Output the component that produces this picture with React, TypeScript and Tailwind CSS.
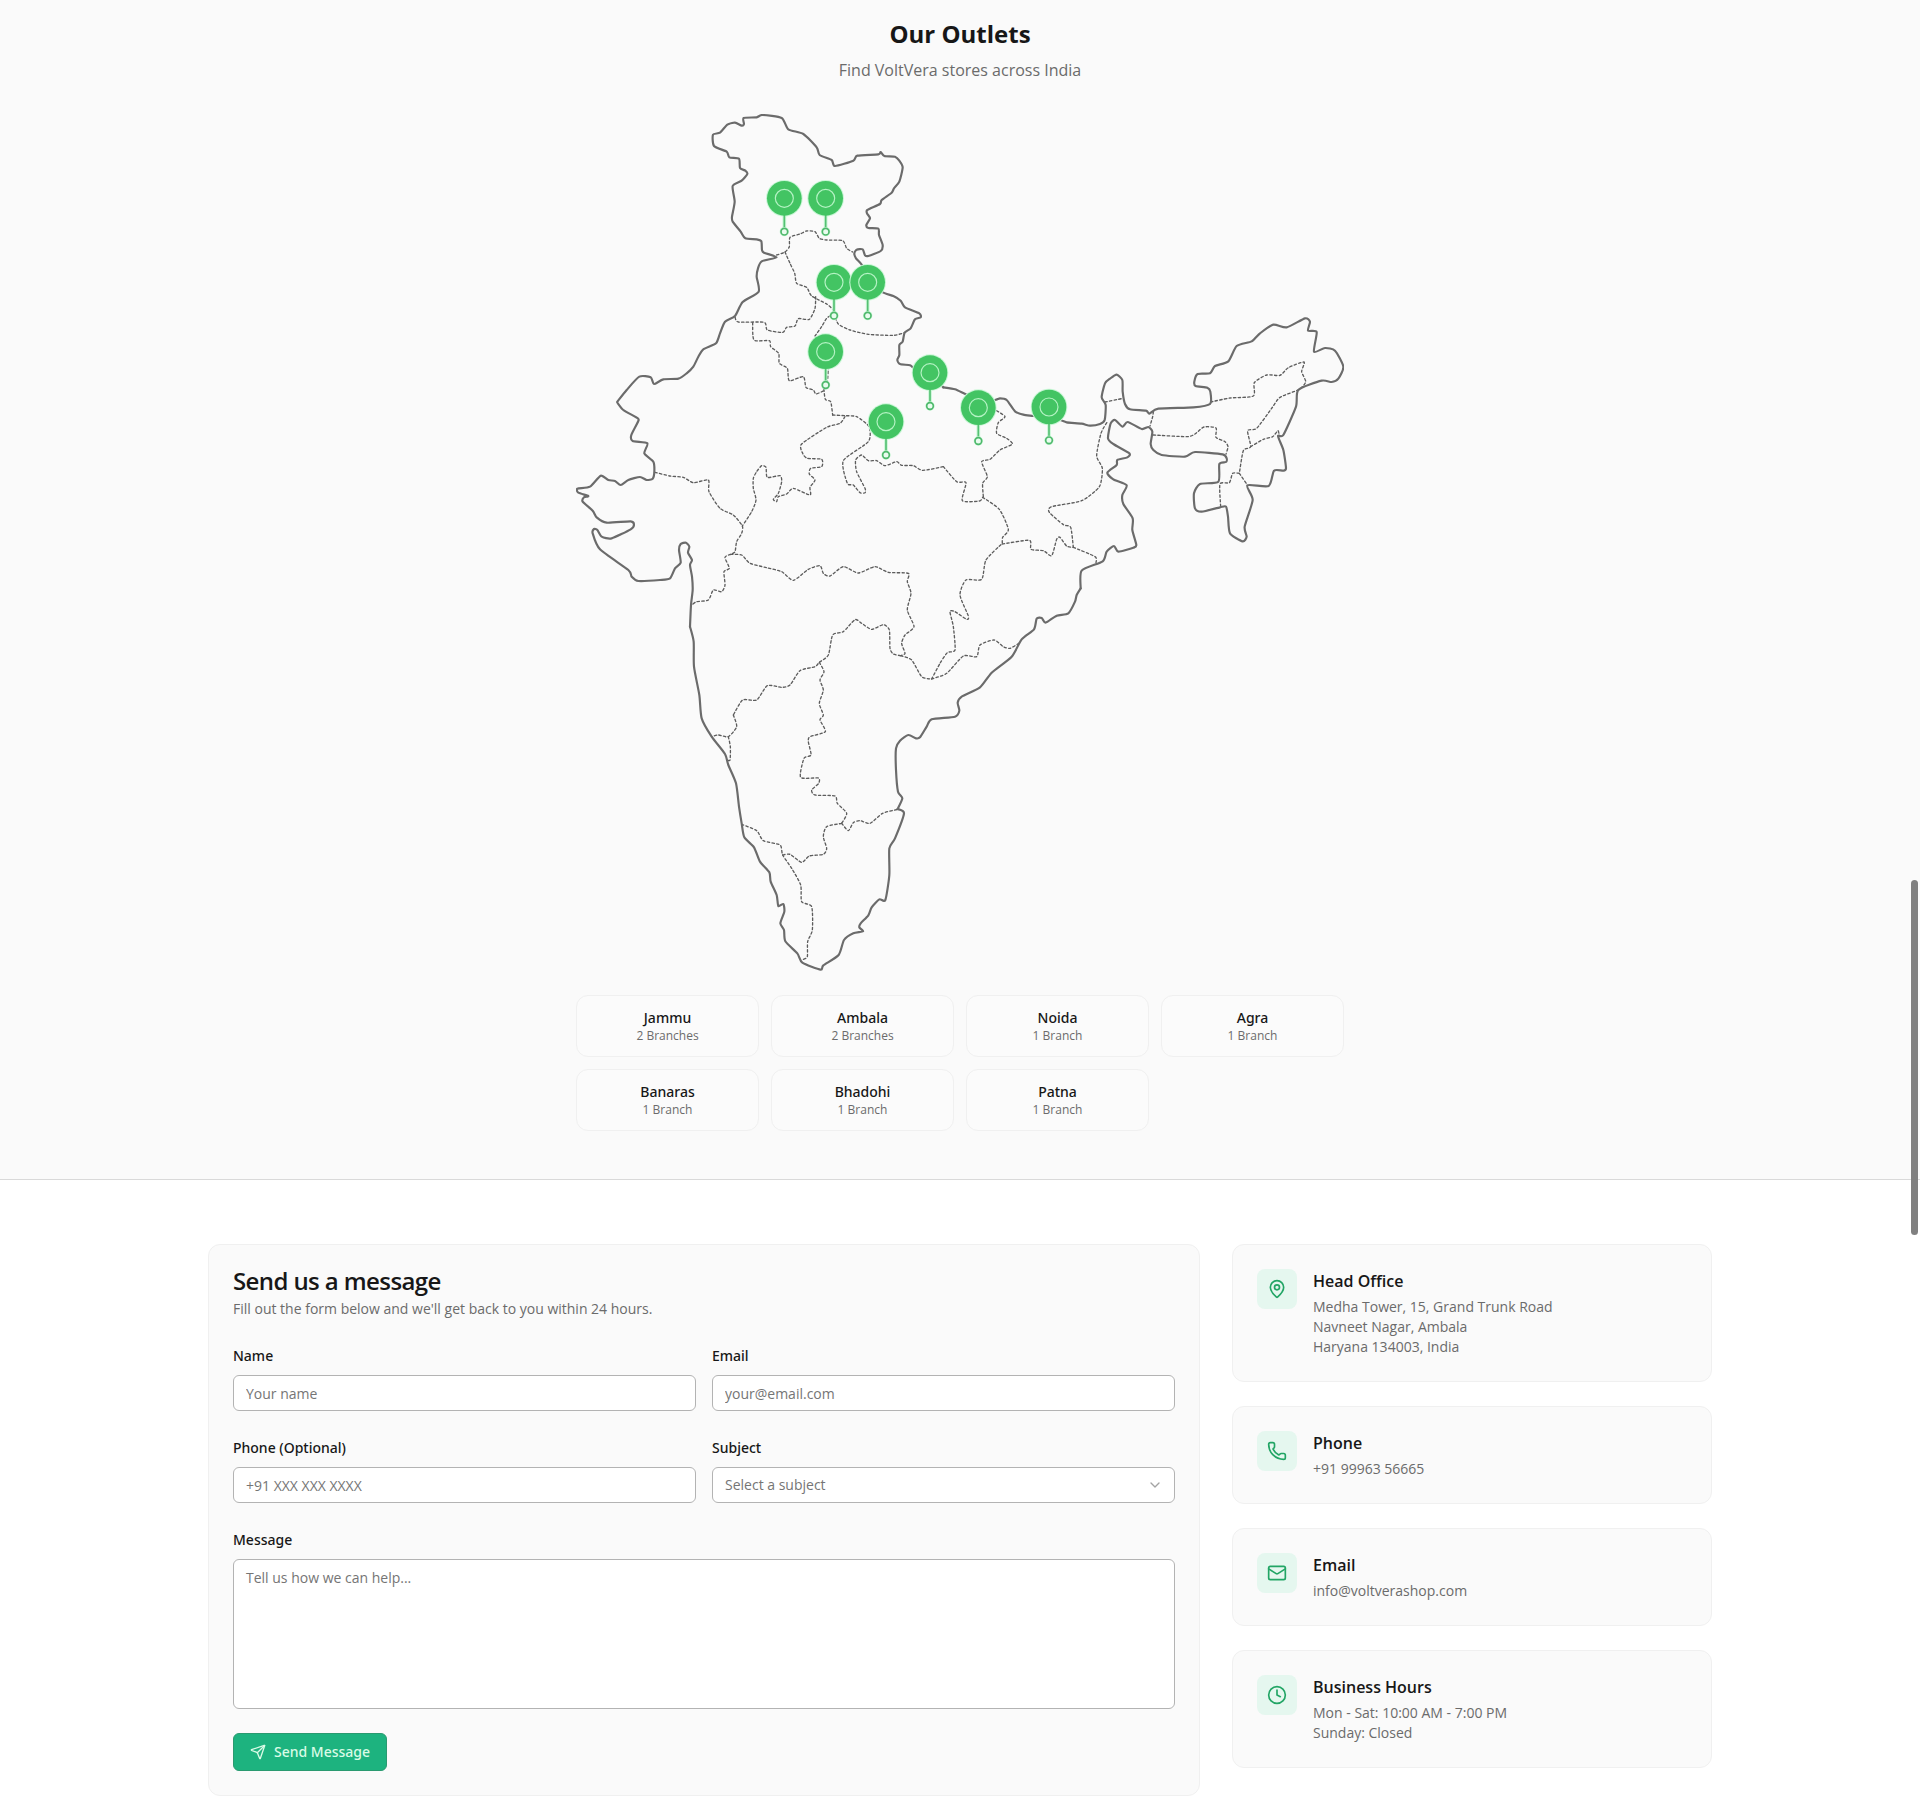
import { useState } from "react";
import type { FormEvent, ReactNode } from "react";
import { ChevronDown, Clock, Mail, MapPin, Phone, Send } from "lucide-react";

type MapSheet = {
  x: number;
  y: number;
  coast: string[];
  borders: string[];
};

// The map is drawn in sheets, each with its own origin
const mapSheets: MapSheet[] = [
  // North
  {
    x: 0,
    y: 0,
    coast: [
      "172,905 200,870 238,830 272,832 282,852 310,838 355,836 380,820 400,800 415,770 430,748 468,730 480,700 495,665 525,648 548,606 596,575 590,530 594,505 605,484 650,472 612,458 606,450 604,424 590,418 556,415 542,395 518,365 516,350 524,305 518,258 545,242 562,222 556,212 540,204 537,176 508,172 500,155 462,138 459,104 480,98 502,74 525,68 545,77 552,72 551,54 590,52 607,45 665,54 685,88 730,102 770,142 779,165 815,180 825,198 880,182 892,167 955,163 962,156 973,168 1005,170 1018,182 1028,202 1018,245 1002,265 995,278 965,300 960,312 922,330 921,340 930,355 919,375 925,384 955,386 957,405 968,435 962,453 925,468 915,466 908,448 890,449 883,460 888,475 905,494 925,530 965,575 1000,588 1022,602 1035,622 1078,640 1082,652 1065,658 1052,685 1034,698 1028,725 1018,735 1018,765 1012,780 1020,792 1050,796 1062,805 1110,830 1150,862",
    ],
    borders: [
      "650,465 675,456 688,440 690,412 720,402 740,393 765,395 778,415 800,420 848,422 860,445 878,456",
      "675,456 690,490 704,520 710,550 740,562 755,588 800,612 820,630 822,640",
      "767,590 765,625 748,658 715,656 705,678 680,682 668,697 622,690 612,667 535,666 525,650",
      "822,640 800,655 785,680 765,708",
      "822,640 835,672 870,690 925,703 1000,706 1034,698",
      "578,668 582,720 628,722 632,740 656,760 658,790 682,805 688,842 730,830 738,862 760,870 768,882 792,872",
      "805,800 802,845 792,862 796,898 812,905 818,945",
    ],
  },
  // West and centre
  {
    x: 0,
    y: 900,
    coast: [
      "390,680 393,615 398,570 396,530 390,495 396,480 384,458 388,440 378,428 362,432 357,450 362,488 345,505 330,535 300,540 235,543 215,530 205,510 120,448 98,400 102,387 112,390 125,410 155,415 212,388 222,374 212,364 140,368 110,352 98,332 68,305 72,292 85,288 55,278 52,266 90,260 122,227 145,240 165,243 182,255 205,240 240,231 260,240 278,236 283,215 280,185 253,160 262,130 218,123 214,105 236,60 225,50 190,30 172,8",
    ],
    borders: [
      "818,45 855,47 890,50 927,80 925,125 850,182 862,250 880,255 900,278 915,278 915,265 890,215 887,180 905,165 925,182 950,182 975,197 1010,185 1025,196 1060,197 1088,211 1150,200",
      "855,50 840,70 800,82 725,132 728,160 742,175 785,178 785,200 752,205 748,222 765,240 750,262 750,285 700,265 680,282 655,290 650,305 640,298 655,280 665,245 660,227 622,232 618,202 605,197 590,215 580,235 580,265 588,300 575,335 547,378",
      "285,217 330,228 370,232 400,248 445,240 447,275 480,325 520,345 547,378 545,400 530,425 525,455 512,463",
      "512,463 495,472 508,505 492,515 495,555 485,575 460,570 445,600 410,605 395,615",
      "512,463 545,465 570,490 620,503 665,515 700,541 745,508 780,497 790,520 810,528 850,500 895,519 945,500 985,517 1045,520 1042,545 1053,580 1042,630 1062,680 1035,705 1025,730 1035,760 1022,767",
      "1022,767 1000,762 990,745 988,690 970,674 935,688 905,670 885,659 850,695 818,705 805,765 778,787 765,800 720,812 690,855 665,862 622,857 590,900 548,900 520,945",
    ],
  },
  // East and north-east
  {
    x: 1020,
    y: 600,
    coast: [
      "130,262 165,268 200,284 245,300 285,300 300,295 320,300 345,334 370,344 400,348 440,354 480,360 500,367 545,371 570,377 600,372 614,360 617,315 605,292 615,250 630,236 650,224 667,240 668,275 675,312 690,328 738,332 748,341 775,326 880,322 930,312 931,275 922,263 887,258 883,245 893,222 930,220 945,198 985,184 1010,138 1055,124 1080,100 1120,74 1160,82 1215,55 1230,65 1224,92 1250,96 1242,155 1275,144 1305,152 1330,200 1315,236 1295,246 1265,242 1195,270 1188,320 1150,405 1134,408 1150,450 1158,505 1150,512 1122,512 1106,558 1042,556 1058,600 1034,680 1040,710 1028,724 990,700 984,650 978,620 960,622 905,635 885,625 882,580 900,552 955,545 958,492 978,486 980,475 968,463 885,456 855,470 785,465 760,450 752,432 757,395 745,381 725,387 683,366 668,380 645,360 632,370 624,415 640,432 688,460 682,472 652,480 650,495 622,518 640,538 680,556 667,585 670,612 698,655 697,690 709,735 700,743 655,755 642,738 620,755 608,784 545,812 542,865",
    ],
    borders: [
      "130,500 170,545 198,548 187,602 238,603 248,592",
      "248,592 298,628 325,688 308,712 307,732",
      "307,732 388,721 393,748 430,752 455,767 470,718 480,712 500,738 520,742",
      "520,742 512,682 490,674 448,637 455,620 545,602 598,560 607,505 590,468 603,400 622,365",
      "520,742 585,770 588,788",
      "290,332 315,350 295,368 290,400 320,415 337,432 300,450 270,478 245,485 262,530 248,550 250,590",
      "615,306 665,296",
      "760,335 758,350 750,378",
      "760,405 860,410 885,402 912,381 948,384 948,412 975,425 984,440 978,462",
      "932,306 990,294 1060,288 1063,248 1100,225 1140,226 1165,203 1212,186 1205,215 1217,245 1198,268 1140,292 1115,325 1070,385 1043,392 1052,440 1030,452 1018,520",
      "1052,440 1090,418 1118,410 1134,392 1138,408",
      "1018,520 998,520 988,548 960,552 962,620",
      "1018,520 1040,552",
    ],
  },
  // South-east coast
  {
    x: 900,
    y: 1140,
    coast: [
      "662,325 650,345 645,365 625,400 590,407 557,428 545,414 530,416 522,448 485,478 455,530 395,578 360,622 305,650 293,668 298,692 285,710 215,718 200,740 180,772 168,775 145,765 120,782 108,805 108,870 114,935 127,955 113,987",
    ],
    borders: [
      "122,527 155,540 185,590 215,597",
      "215,597 260,580 310,528 350,530 360,495 402,480 430,500 450,505 480,488",
      "215,597 240,550 262,518 285,510 280,440 270,395 285,395 320,418 325,408 300,345 318,300 365,298 378,240 427,190",
    ],
  },
  // South
  {
    x: 0,
    y: 1560,
    coast: [
      "1013,567 1032,580 1005,655 988,685 988,765 976,840 958,838 935,862 925,886 902,910 898,922 909,934 880,940 852,960 836,1005 790,1036 782,1049 727,1028 712,1000 676,964 672,930 661,910 673,875 670,852 655,858 650,825 632,785 628,757 600,725 582,682 553,652 545,610 537,560 528,490 505,435 495,402 455,350 425,295 418,225 402,140 401,65 390,20",
    ],
    borders: [
      "520,285 530,320 505,350 475,345 455,350",
      "505,350 511,380 510,420 500,420",
      "778,127 792,155 780,180 790,210 778,250 790,285 780,300 796,335 750,350 745,365 753,405 732,415 722,472 775,474 776,490 755,510 765,525 825,528 832,550 860,580 845,610",
      "845,610 865,632 880,608 900,602 930,610 968,580 1013,568",
      "845,610 800,620 790,650 800,685 790,703 748,708 725,727 690,703 668,705",
      "545,613 590,632 610,662 660,675 668,705 695,745 722,795 725,845 755,860 757,930 743,965 742,1010 730,1018",
    ],
  },
];

const pins = [
  { city: "Jammu", x: 673, y: 295 },
  { city: "Jammu", x: 797, y: 295 },
  { city: "Ambala", x: 822, y: 547 },
  { city: "Ambala", x: 923, y: 547 },
  { city: "Noida", x: 797, y: 755 },
  { city: "Agra", x: 1110, y: 818 },
  { city: "Banaras", x: 978, y: 965 },
  { city: "Bhadohi", x: 1255, y: 923 },
  { city: "Patna", x: 1467, y: 921 },
];

const outlets = [
  { city: "Jammu", branches: 2 },
  { city: "Ambala", branches: 2 },
  { city: "Noida", branches: 1 },
  { city: "Agra", branches: 1 },
  { city: "Banaras", branches: 1 },
  { city: "Bhadohi", branches: 1 },
  { city: "Patna", branches: 1 },
];

const subjects = ["Product Inquiry", "Order Support", "Business Opportunity", "Other"];

// Soft curve through a list of "x,y" points
function smoothPath(points: string) {
  const p = points.split(" ").map((pair) => pair.split(",").map(Number));
  let d = `M${p[0][0]} ${p[0][1]}`;
  for (let i = 0; i < p.length - 1; i++) {
    const prev = p[i - 1] || p[i];
    const next = p[i + 1];
    const after = p[i + 2] || next;
    const c1 = [p[i][0] + (next[0] - prev[0]) / 9, p[i][1] + (next[1] - prev[1]) / 9];
    const c2 = [next[0] - (after[0] - p[i][0]) / 9, next[1] - (after[1] - p[i][1]) / 9];
    d += `C${c1[0]} ${c1[1]} ${c2[0]} ${c2[1]} ${next[0]} ${next[1]}`;
  }
  return d;
}

function IndiaMap() {
  return (
    <svg
      viewBox="48 42 2304 2571"
      className="block w-full h-auto"
      fill="none"
      role="img"
      aria-label="Map of India with VoltVera outlets"
    >
      {mapSheets.map((sheet, i) => (
        <g
          key={i}
          transform={`translate(${sheet.x} ${sheet.y})`}
          strokeLinecap="round"
          strokeLinejoin="round"
        >
          {sheet.borders.map((line) => (
            <path
              key={line}
              d={smoothPath(line)}
              stroke="#5c5c5c"
              strokeWidth="4"
              strokeDasharray="7 7"
            />
          ))}
          {sheet.coast.map((line) => (
            <path key={line} d={smoothPath(line)} stroke="#6b6b6b" strokeWidth="6.5" />
          ))}
        </g>
      ))}
      {pins.map((pin) => (
        <g key={`${pin.x}-${pin.y}`} transform={`translate(${pin.x} ${pin.y})`}>
          <circle r="55" fill="#c9f7d6" />
          <path d="M0 50V90" stroke="#c9f7d6" strokeWidth="11" />
          <path d="M0 50V90" stroke="#55c073" strokeWidth="5" />
          <circle cy="100" r="14" fill="#c9f7d6" />
          <circle cy="100" r="10" fill="#e9fcef" stroke="#4fb86c" strokeWidth="5" />
          <circle r="52" fill="#43c463" />
          <circle r="27" stroke="#b5f3c4" strokeWidth="3.5" />
        </g>
      ))}
    </svg>
  );
}

function InfoCard({
  icon,
  title,
  children,
}: {
  icon: ReactNode;
  title: string;
  children: ReactNode;
}) {
  return (
    <div className="flex items-start gap-4 rounded-xl border border-[#f0f0f0] bg-[#fafafa] p-6">
      <div className="flex h-10 w-10 shrink-0 items-center justify-center rounded-lg bg-[#e5f7ef] text-[#22a565]">
        {icon}
      </div>
      <div>
        <h3 className="mb-1 text-base font-semibold">{title}</h3>
        <div className="text-sm text-[#6b6b6b]">{children}</div>
      </div>
    </div>
  );
}

const fieldClass =
  "block w-full rounded-md border border-[#b3b3b3] bg-white px-3 text-sm placeholder:text-[#757575] focus:outline-none focus:ring-1 focus:ring-emerald-500";

function Field({
  id,
  label,
  children,
}: {
  id: string;
  label: string;
  children: ReactNode;
}) {
  return (
    <div className="space-y-2">
      <div>
        <label htmlFor={id} className="font-['Noto_Sans',sans-serif] text-sm leading-none font-medium">
          {label}
        </label>
      </div>
      {children}
    </div>
  );
}

function ContactForm() {
  const [subject, setSubject] = useState("");

  const handleSubmit = (e: FormEvent) => {
    e.preventDefault();
  };

  return (
    <div className="rounded-xl border border-[#f0f0f0] bg-[#fafafa] p-6 lg:col-span-2">
      <h2 className="text-2xl leading-6 font-semibold tracking-tight">Send us a message</h2>
      <p className="mt-1.5 text-sm text-[#6b6b6b]">
        Fill out the form below and we'll get back to you within 24 hours.
      </p>

      <form className="mt-6 space-y-6" onSubmit={handleSubmit}>
        <div className="grid gap-x-4 gap-y-6 md:grid-cols-2">
          <Field id="name" label="Name">
            <input id="name" type="text" placeholder="Your name" className={`${fieldClass} h-9`} />
          </Field>
          <Field id="email" label="Email">
            <input id="email" type="email" placeholder="your@email.com" className={`${fieldClass} h-9`} />
          </Field>
          <Field id="phone" label="Phone (Optional)">
            <input id="phone" type="tel" placeholder="+91 XXX XXX XXXX" className={`${fieldClass} h-9`} />
          </Field>
          <Field id="subject" label="Subject">
            <div className="relative">
              <select
                id="subject"
                value={subject}
                onChange={(e) => setSubject(e.target.value)}
                className={`${fieldClass} h-9 appearance-none text-[#757575]`}
              >
                <option value="">Select a subject</option>
                {subjects.map((s) => (
                  <option key={s} value={s}>
                    {s}
                  </option>
                ))}
              </select>
              <ChevronDown className="pointer-events-none absolute top-2.5 right-3 h-4 w-4 text-[#a3a3a3]" />
            </div>
          </Field>
        </div>

        <Field id="message" label="Message">
          <textarea
            id="message"
            placeholder="Tell us how we can help..."
            className={`${fieldClass} h-[150px] resize-none py-2`}
          />
        </Field>

        <button
          type="submit"
          className="flex items-center gap-2 rounded-md border border-[#2a9a70] bg-[#1db37f] px-4 py-2 font-['Noto_Sans',sans-serif] text-sm font-medium text-[#d9fbe6]"
        >
          <Send className="h-4 w-4" />
          Send Message
        </button>
      </form>
    </div>
  );
}

export default function App() {
  return (
    <div className="min-h-screen bg-white font-['Open_Sans',sans-serif] text-[#171717]">
      {/* Outlets */}
      <section className="border-b border-[#d9d9d9] bg-[#fafafa] px-4 pt-[18px] pb-12">
        <div className="mb-8 text-center">
          <h2 className="mb-2 text-2xl font-bold">Our Outlets</h2>
          <p className="text-base text-[#6b6b6b]">Find VoltVera stores across India</p>
        </div>
        <div className="mx-auto max-w-3xl">
          <IndiaMap />
          <div className="mt-6 grid grid-cols-2 gap-3 md:grid-cols-4">
            {outlets.map((outlet) => (
              <div
                key={outlet.city}
                className="rounded-xl border border-[#f0f0f0] bg-[#fbfbfb] p-3 text-center"
              >
                <p className="font-['Noto_Sans',sans-serif] text-sm font-medium">{outlet.city}</p>
                <p className="text-xs text-[#6b6b6b]">
                  {outlet.branches} {outlet.branches > 1 ? "Branches" : "Branch"}
                </p>
              </div>
            ))}
          </div>
        </div>
      </section>

      {/* Contact */}
      <section className="mx-auto max-w-[1536px] px-4 pt-16 pb-3">
        <div className="grid gap-8 lg:grid-cols-3">
          <ContactForm />
          <div className="space-y-6">
            <InfoCard icon={<MapPin className="h-5 w-5" />} title="Head Office">
              <p>Medha Tower, 15, Grand Trunk Road</p>
              <p>Navneet Nagar, Ambala</p>
              <p>Haryana 134003, India</p>
            </InfoCard>
            <InfoCard icon={<Phone className="h-5 w-5" />} title="Phone">
              <a href="tel:+919996356665">+91 99963 56665</a>
            </InfoCard>
            <InfoCard icon={<Mail className="h-5 w-5" />} title="Email">
              <a href="mailto:info@voltverashop.com">info@voltverashop.com</a>
            </InfoCard>
            <InfoCard icon={<Clock className="h-5 w-5" />} title="Business Hours">
              <p>Mon - Sat: 10:00 AM - 7:00 PM</p>
              <p>Sunday: Closed</p>
            </InfoCard>
          </div>
        </div>
      </section>

      {/* Scroll thumb */}
      <div className="fixed top-[880px] right-0.5 h-[355px] w-[7px] rounded-full bg-[#808080]" />
    </div>
  );
}
